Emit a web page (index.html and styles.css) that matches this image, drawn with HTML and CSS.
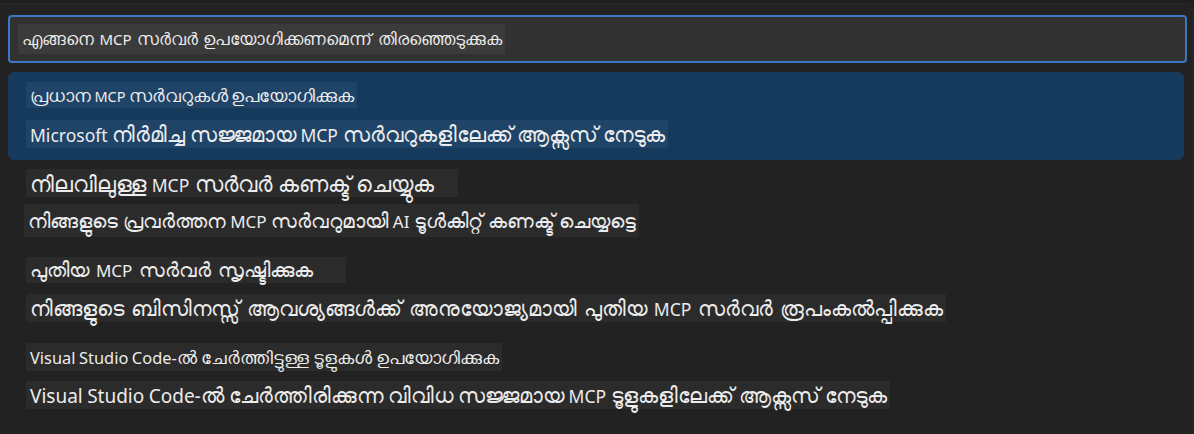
FILE: index.html
```html
<!DOCTYPE html>
<html lang="ml">
<head>
<meta charset="utf-8">
<title>MCP</title>
<link rel="stylesheet" href="styles.css">
</head>
<body>
<div class="panel">
  <div class="input">
    <span class="tx t-input">എങ്ങനെ <span class="la">MCP</span> സര്‍വര്‍ ഉപയോഗിക്കണമെന്ന് തിരഞ്ഞെടുക്കുക</span>
  </div>
  <div class="list">
    <div class="item selected">
      <span class="tx t-sub">പ്രധാന <span class="la">MCP</span> സര്‍വറുകള്‍ ഉപയോഗിക്കുക</span>
      <span class="tx t-big s-ms"><span class="la">Microsoft</span> നിര്‍മിച്ച സജ്ജമായ <span class="la">MCP</span> സര്‍വറുകളിലേക്ക് ആക്സസ് നേടുക</span>
    </div>
    <div class="item plain first">
      <span class="tx t-big s-conn extra-20">നിലവിലുള്ള <span class="la">MCP</span> സര്‍വര്‍ കണക്ട് ചെയ്യുക</span>
      <span class="tx t-mid shift">നിങ്ങളുടെ പ്രവര്‍ത്തന <span class="la">MCP</span> സര്‍വറുമായി <span class="la">AI</span> ടൂള്‍കിറ്റ് കണക്ട് ചെയ്യട്ടെ</span>
    </div>
    <div class="item plain gap11">
      <span class="tx t-sub15 extra-30">പുതിയ <span class="la">MCP</span> സര്‍വര്‍ സൃഷ്ടിക്കുക</span>
      <span class="tx t-big s-biz">നിങ്ങളുടെ ബിസിനസ്സ് ആവശ്യങ്ങള്‍ക്ക് അനുയോജ്യമായി പുതിയ <span class="la">MCP</span> സര്‍വര്‍ രൂപംകല്‍പ്പിക്കുക</span>
    </div>
    <div class="item plain gap10 last">
      <span class="tx t-subvs"><span class="la">Visual Studio Code-</span>ല്‍ ചേര്‍ത്തിട്ടുള്ള ടൂളുകള്‍ ഉപയോഗിക്കുക</span>
      <span class="tx t-big s-vs"><span class="la vs">Visual Studio Code-</span>ല്‍ ചേര്‍ത്തിരിക്കുന്ന വിവിധ സജ്ജമായ <span class="la">MCP</span> ടൂളുകളിലേക്ക് ആക്സസ് നേടുക</span>
    </div>
  </div>
</div>
</body>
</html>
```
FILE: styles.css
```css
html, body {
  margin: 0;
  padding: 0;
  background: #1e1e1e;
}
body {
  width: 1194px;
  height: 434px;
  overflow: hidden;
  font-family: "Noto Sans", "DejaVu Sans", sans-serif;
  color: #ececec;
}
.panel {
  margin-top: 3px;
  height: 431px;
  background: #222222;
  border-top-right-radius: 8px;
  border-top: 1px solid #2a2a2a;
  border-right: 1px solid #2a2a2a;
  box-sizing: border-box;
  padding: 11px 0 0 8px;
}
.input {
  width: 1179px;
  height: 48px;
  box-sizing: border-box;
  border: 2px solid #3b78c4;
  border-radius: 4px;
  background: #313131;
  padding: 7px 8px;
}
.tx {
  display: inline-block;
  white-space: nowrap;
  padding: 0 3px 0 4px;
  box-sizing: border-box;
}
.t-input {
  background: #3b3b3b;
  font-size: 17px;
  word-spacing: 1px;
  height: 30px;
  line-height: 30px;
}
.t-input .la { font-size: 15px; }
.list {
  margin-top: 9px;
}
.item {
  display: flex;
  flex-direction: column;
  align-items: flex-start;
}
.selected {
  width: 1176px;
  height: 88px;
  box-sizing: border-box;
  background: #163a5c;
  border-radius: 6px;
  padding: 10px 18px;
  gap: 12px;
}
.selected .tx {
  background: #1f4468;
}
.plain {
  padding-left: 18px;
  gap: 7px;
}
.plain .tx {
  background: #2b2b2b;
}
.first {
  margin-top: 9px;
}
.plain + .plain {
  margin-top: 20px;
}
.plain + .last {
  margin-top: 21px;
}
.gap11 { gap: 11px; }
.gap10 { gap: 10px; }
.t-sub {
  font-size: 18px;
  word-spacing: -1.3px;
  height: 26px;
  line-height: 26px;
}
.t-sub .la { font-size: 14.5px; }
.t-subvs {
  font-size: 18px;
  word-spacing: -0.7px;
  height: 28px;
  line-height: 28px;
}
.t-subvs .la { font-size: 16.4px; }
.t-sub15 {
  font-size: 20px;
  word-spacing: 1.7px;
  height: 26px;
  line-height: 26px;
}
.t-sub15 .la { font-size: 17px; }
.t-mid {
  font-size: 20px;
  word-spacing: -0.6px;
  height: 33px;
  line-height: 33px;
}
.t-mid .la { font-size: 17px; }
.t-big {
  font-size: 21px;
  height: 28px;
  line-height: 28px;
}
.t-big .la { font-size: 17.5px; }
.t-big .la.vs { font-size: 19px; }
.s-ms { word-spacing: -0.85px; }
.s-conn { font-size: 22px; }
.s-biz { word-spacing: 1.5px; }
.s-vs { word-spacing: -0.5px; }
.shift {
  margin-left: -2px;
}
.extra-20 { padding-right: 24px; }
.extra-30 { padding-right: 33px; }
```
